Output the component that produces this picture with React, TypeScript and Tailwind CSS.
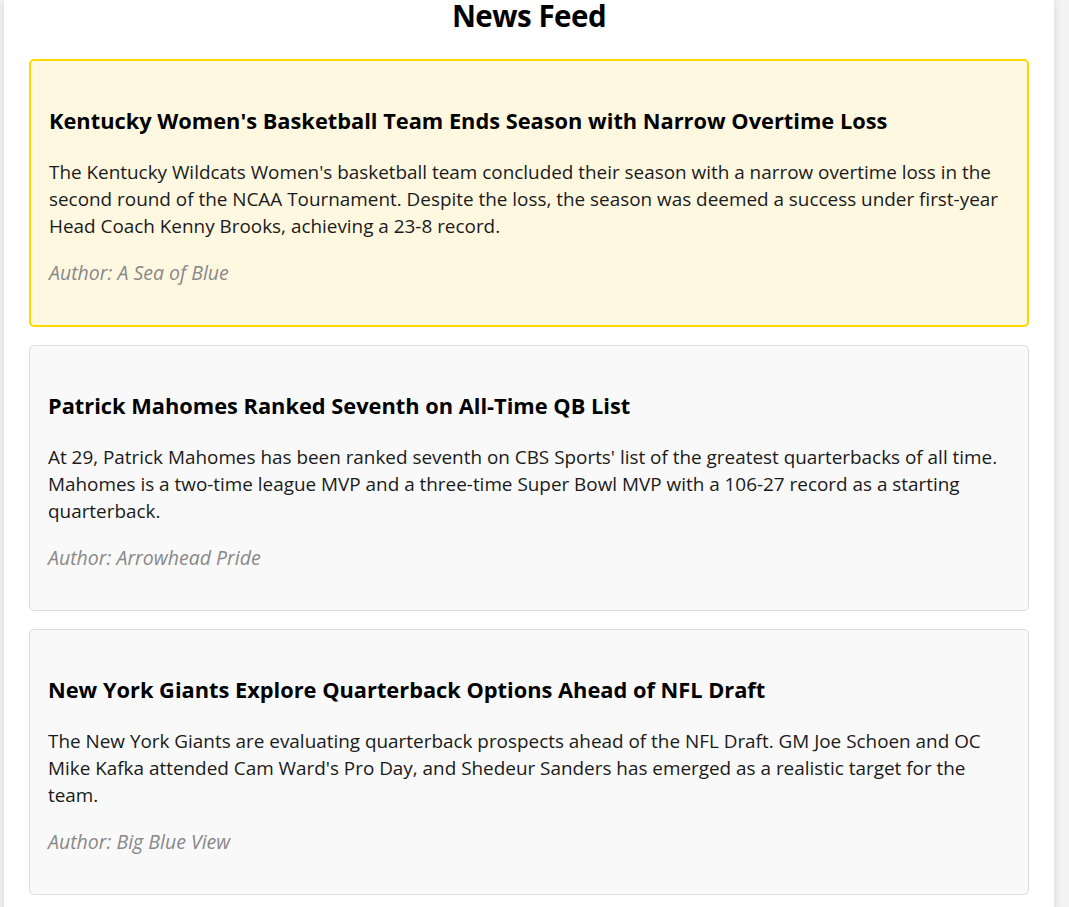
import React from "react";

type Item = { title: string; body: string; author: string; highlight?: boolean };

const items: Item[] = [
  {
    title: "Kentucky Women's Basketball Team Ends Season with Narrow Overtime Loss",
    body: "The Kentucky Wildcats Women's basketball team concluded their season with a narrow overtime loss in the second round of the NCAA Tournament. Despite the loss, the season was deemed a success under first-year Head Coach Kenny Brooks, achieving a 23-8 record.",
    author: "A Sea of Blue",
    highlight: true,
  },
  {
    title: "Patrick Mahomes Ranked Seventh on All-Time QB List",
    body: "At 29, Patrick Mahomes has been ranked seventh on CBS Sports' list of the greatest quarterbacks of all time. Mahomes is a two-time league MVP and a three-time Super Bowl MVP with a 106-27 record as a starting quarterback.",
    author: "Arrowhead Pride",
  },
  {
    title: "New York Giants Explore Quarterback Options Ahead of NFL Draft",
    body: "The New York Giants are evaluating quarterback prospects ahead of the NFL Draft. GM Joe Schoen and OC Mike Kafka attended Cam Ward's Pro Day, and Shedeur Sanders has emerged as a realistic target for the team.",
    author: "Big Blue View",
  },
];

export default function App() {
  return (
    <div
      className="min-h-[907px] bg-[#f4f4f4] pl-[4px] flex"
      style={{ fontFamily: '"Open Sans", "Noto Sans", sans-serif' }}
    >
      <div className="w-[1050px] bg-white shadow-[0_0_10px_rgba(0,0,0,0.12)] px-[25px] pb-[20px]">
        <h1 className="text-[29.5px] font-bold leading-[31px] tracking-[-0.5px] text-center text-black mb-[28px]">
          News Feed
        </h1>
        <div className="flex flex-col gap-[18px]">
          {items.map((it) => (
            <div
              key={it.title}
              className={
                it.highlight
                  ? "rounded-[5px] border-2 border-[#ffd700] bg-[#fff8e1] pl-[18px] pr-[18px] pt-[45px] pb-[39px]"
                  : "rounded-[5px] border border-[#dddddd] bg-[#f9f9f9] pl-[18px] pr-[18px] pt-[45px] pb-[39px]"
              }
            >
              <h2 className="text-[21.8px] font-bold leading-[30px] text-black">{it.title}</h2>
              <p className="mt-[23px] text-[18.9px] leading-[27px] text-[#1a1a1a]">{it.body}</p>
              <p className="mt-[19px] text-[19.5px] leading-[27px] italic text-[#888]">
                Author: {it.author}
              </p>
            </div>
          ))}
        </div>
      </div>
    </div>
  );
}
